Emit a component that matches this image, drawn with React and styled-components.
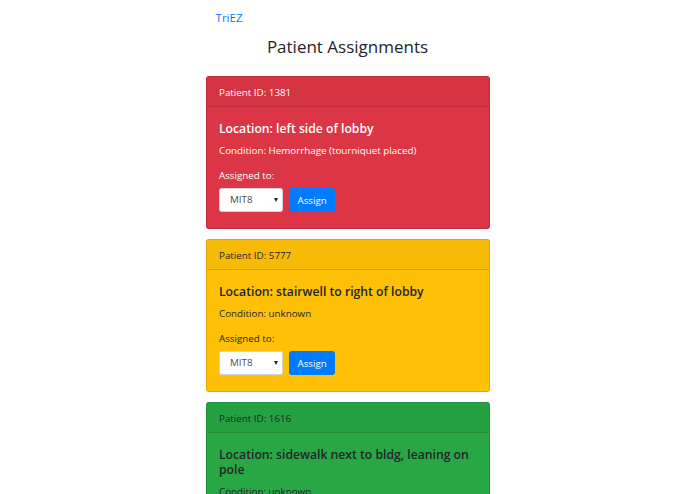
import React from "react";
import styled, { createGlobalStyle } from "styled-components";

const Global = createGlobalStyle`
  html, body { margin: 0; padding: 0; background: #fff; }
  body {
    font-family: "Open Sans", "Noto Sans", "Liberation Sans", sans-serif;
    color: #212529;
    -webkit-font-smoothing: antialiased;
  }
  * { box-sizing: border-box; }
`;

const Page = styled.div`
  width: 284px;
  margin: 0 auto;
`;

const Navbar = styled.nav`
  display: flex;
  align-items: center;
  padding: 5px 10px;
`;

const Brand = styled.a`
  color: #007bff;
  font-size: 11.6px;
  line-height: 18.75px;
  padding: 4px 0 2px;
  text-decoration: none;
`;

const Heading = styled.h3`
  margin: 1px 0 19px;
  text-align: center;
  font-size: 17px;
  line-height: 21px;
  font-weight: 500;
  color: #212529;
`;

const palette = {
  danger: { bg: "#dc3545", fg: "#ffffff" },
  warning: { bg: "#ffc107", fg: "#212529" },
  success: { bg: "#28a745", fg: "#212529" },
};

const Card = styled.section`
  background: ${(p) => palette[p.$variant].bg};
  color: ${(p) => palette[p.$variant].fg};
  border: 1px solid rgba(0, 0, 0, 0.125);
  border-radius: 3px;
  margin-bottom: 10px;
  overflow: hidden;
`;

const CardHeader = styled.div`
  padding: 8px 12.5px 6.5px;
  font-size: 9.8px;
  line-height: 15px;
  background: rgba(0, 0, 0, 0.03);
  border-bottom: 1px solid rgba(0, 0, 0, 0.125);
`;

const CardBody = styled.div`
  padding: 14px 12.5px 15.5px;
`;

const Title = styled.h5`
  margin: 0 0 6.5px;
  font-size: 12.2px;
  line-height: 15px;
  font-weight: 600;
`;

const Text = styled.p`
  margin: 0 0 ${(p) => p.$mb}px;
  font-size: 9.8px;
  line-height: 15px;
`;

const FormRow = styled.div`
  display: flex;
  align-items: center;
  gap: 6px;
`;

const Select = styled.div`
  position: relative;
  width: 64px;
  height: 24.5px;
  background: #fff;
  border: 1px solid #ced4da;
  border-radius: 2.5px;
  color: #495057;
  font-size: 9.8px;
  line-height: 22.5px;
  padding-left: 10px;
`;

const Caret = styled.span`
  position: absolute;
  right: 4px;
  top: 9.5px;
  width: 0;
  height: 0;
  border-left: 2.5px solid transparent;
  border-right: 2.5px solid transparent;
  border-top: 4px solid #222;
`;

const Button = styled.button`
  height: 24.5px;
  padding: 0 7.5px;
  background: #007bff;
  color: #fff;
  border: 1px solid #007bff;
  border-radius: 2.5px;
  font-family: inherit;
  font-size: 9.8px;
  line-height: 15px;
  cursor: pointer;
`;

const patients = [
  { id: 1381, variant: "danger", location: "left side of lobby", condition: "Hemorrhage (tourniquet placed)" },
  { id: 5777, variant: "warning", location: "stairwell to right of lobby", condition: "unknown" },
  { id: 1616, variant: "success", location: "sidewalk next to bldg, leaning on pole", condition: "unknown" },
];

export default function App() {
  return (
    <>
      <Global />
      <Page>
        <Navbar>
          <Brand href="#">TriEZ</Brand>
        </Navbar>
        <Heading>Patient Assignments</Heading>
        {patients.map((p) => (
          <Card key={p.id} $variant={p.variant}>
            <CardHeader>Patient ID: {p.id}</CardHeader>
            <CardBody>
              <Title>Location: {p.location}</Title>
              <Text $mb={10}>Condition: {p.condition}</Text>
              <Text $mb={5}>Assigned to:</Text>
              <FormRow>
                <Select>
                  MIT8
                  <Caret />
                </Select>
                <Button>Assign</Button>
              </FormRow>
            </CardBody>
          </Card>
        ))}
      </Page>
    </>
  );
}
